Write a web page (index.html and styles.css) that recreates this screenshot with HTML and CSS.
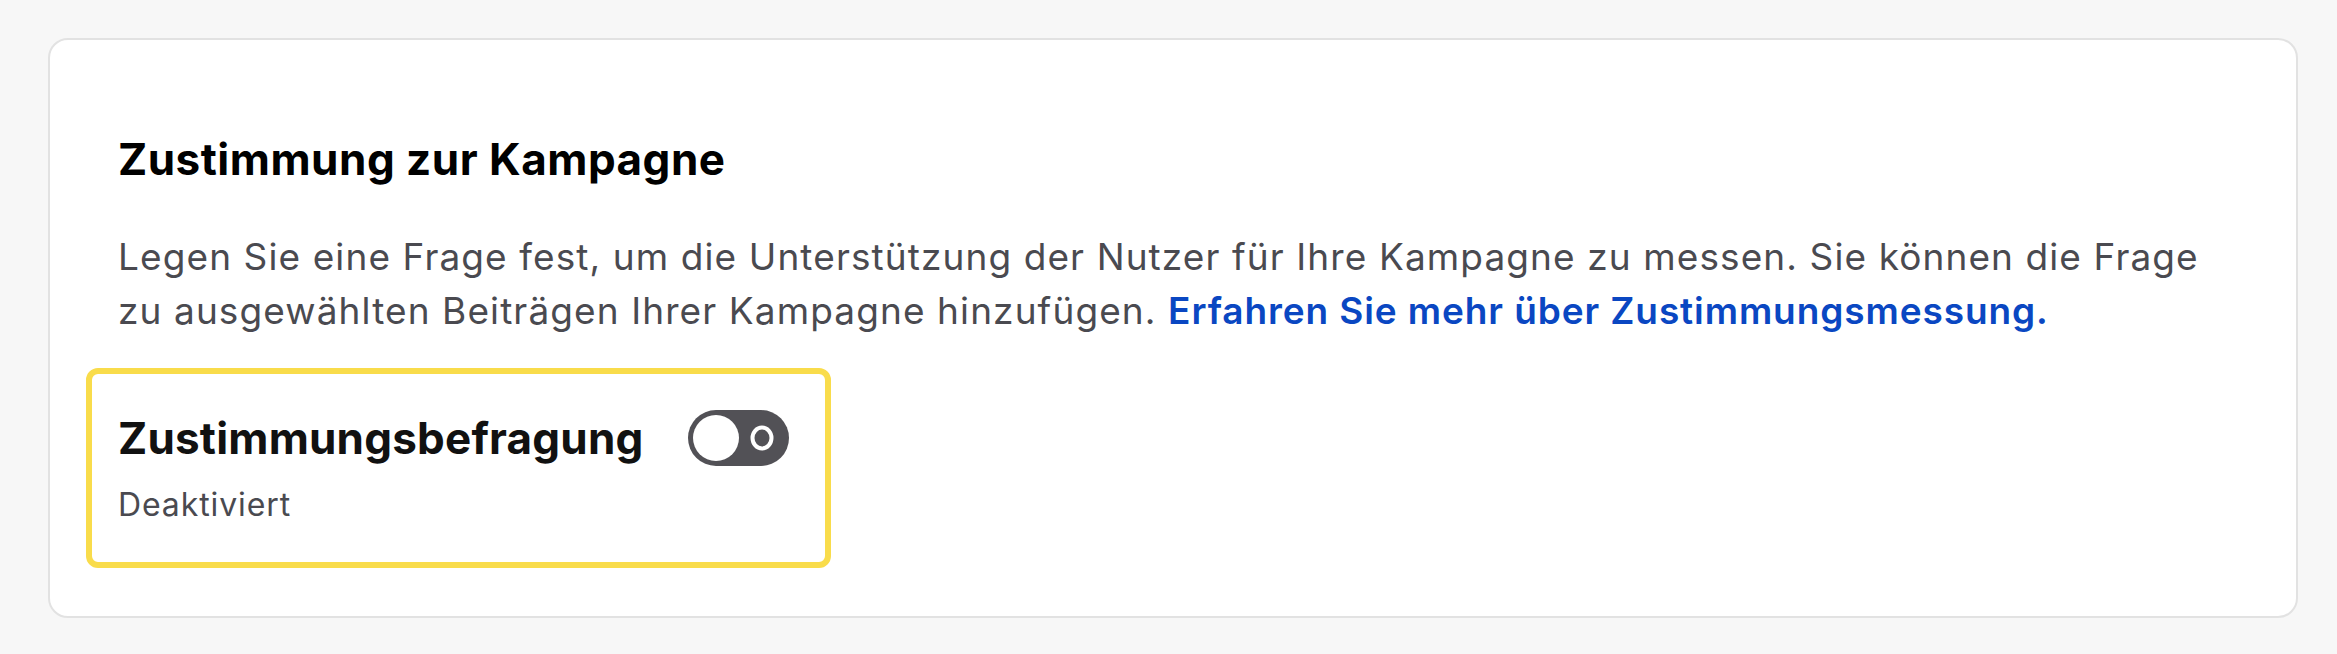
FILE: index.html
```html
<!DOCTYPE html>
<html lang="de">
<head>
<meta charset="utf-8">
<title>Zustimmung zur Kampagne</title>
<link rel="stylesheet" href="styles.css">
</head>
<body>
<section class="card">
  <h2 class="card-title">Zustimmung zur Kampagne</h2>
  <p class="card-text">Legen Sie eine Frage fest, um die Unterstützung der Nutzer für Ihre Kampagne zu messen. Sie können die Frage zu ausgewählten Beiträgen Ihrer Kampagne hinzufügen. <a class="link" href="#">Erfahren Sie mehr über Zustimmungsmessung.</a></p>
  <div class="setting">
    <div class="setting-row">
      <span class="setting-title">Zustimmungsbefragung</span>
      <span class="toggle" role="switch" aria-checked="false">
        <span class="knob"></span>
        <svg class="off-mark" width="26" height="28" viewBox="0 0 26 28"><ellipse cx="13" cy="14" rx="9.5" ry="10.5" fill="none" stroke="#fff" stroke-width="4"/></svg>
      </span>
    </div>
    <div class="setting-status">Deaktiviert</div>
  </div>
</section>
</body>
</html>
```

FILE: styles.css
```css
html, body {
  margin: 0;
  padding: 0;
}
body {
  background: #f7f7f7;
  font-family: Inter, "Noto Sans", "Liberation Sans", sans-serif;
  padding: 38px 39px 36px 48px;
}
.card {
  background: #fff;
  border: 2px solid #e2e2e2;
  border-radius: 20px;
  padding: 92px 68px 51px 68px;
  box-sizing: border-box;
  height: 580px;
}
.card-title {
  margin: 0;
  font-size: 44px;
  line-height: 54px;
  font-weight: 700;
  color: #000;
  letter-spacing: 0.5px;
}
.card-text {
  margin: 44px 0 0 0;
  font-size: 37px;
  line-height: 54px;
  letter-spacing: 1.1px;
  color: #4a4a50;
}
.link {
  color: #0a47c2;
  font-weight: 600;
  letter-spacing: 0.9px;
  text-decoration: none;
}
.setting {
  margin: 30px 0 0 -32px;
  width: fit-content;
  border: 6px solid #f9dc4b;
  border-radius: 12px;
  padding: 36px 36px 33px 26px;
}
.setting-row {
  display: flex;
  align-items: center;
  gap: 44px;
}
.setting-title {
  font-size: 44px;
  line-height: 54px;
  font-weight: 700;
  letter-spacing: 0.2px;
  color: #111;
}
.toggle {
  width: 101px;
  height: 56px;
  border-radius: 28px;
  background: #525156;
  display: flex;
  align-items: center;
  justify-content: space-between;
  padding: 0 14px 0 5px;
  box-sizing: border-box;
}
.knob {
  width: 46px;
  height: 46px;
  border-radius: 50%;
  background: #fff;
}
.off-mark {
  display: block;
}
.setting-status {
  margin-top: 15px;
  font-size: 32px;
  line-height: 48px;
  letter-spacing: 0.9px;
  color: #4a4a50;
}
```
